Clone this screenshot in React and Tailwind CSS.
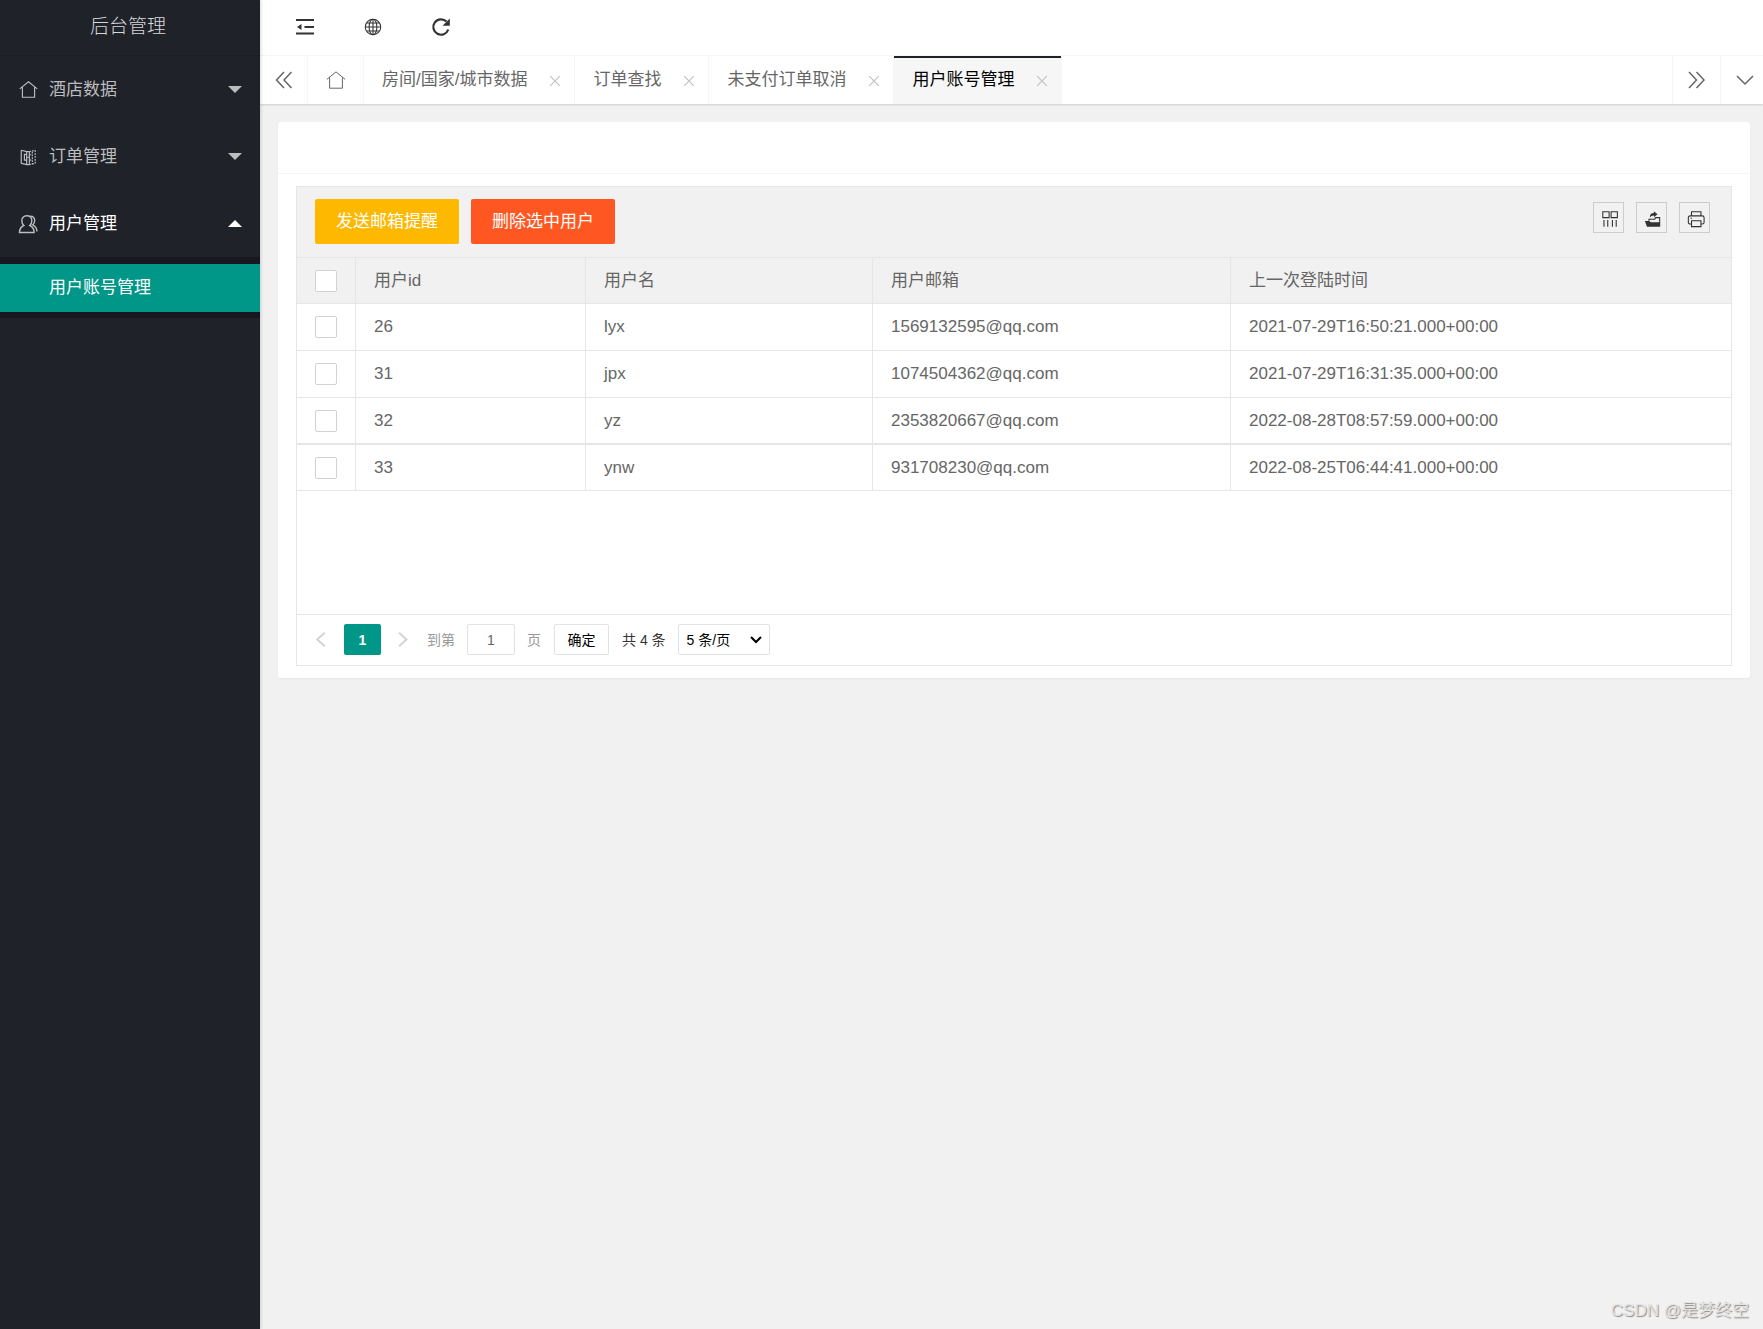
import { useState } from "react";

const users = [
  { id: 26, name: "lyx", email: "1569132595@qq.com", last: "2021-07-29T16:50:21.000+00:00" },
  { id: 31, name: "jpx", email: "1074504362@qq.com", last: "2021-07-29T16:31:35.000+00:00" },
  { id: 32, name: "yz", email: "2353820667@qq.com", last: "2022-08-28T08:57:59.000+00:00" },
  { id: 33, name: "ynw", email: "931708230@qq.com", last: "2022-08-25T06:44:41.000+00:00" },
];

const tabs = ["房间/国家/城市数据", "订单查找", "未支付订单取消", "用户账号管理"];

function Svg({ size = 20, children, ...rest }) {
  return (
    <svg
      width={size}
      height={size}
      viewBox="0 0 20 20"
      fill="none"
      stroke="currentColor"
      strokeWidth="1"
      aria-hidden="true"
      className="shrink-0"
      {...rest}
    >
      {children}
    </svg>
  );
}

const HomeIcon = ({ size, weight = 1 }) => (
  <Svg size={size} strokeWidth={weight}>
    <path d="M.8 9.4 10 1.9l9.2 7.500M3.600 7.600v10.600h12.800V7.600" />
  </Svg>
);

const OrderIcon = () => (
  <Svg size={18} strokeWidth="1.300">
    <path d="M2.500 2.500v14.500l6 1.500h3M2.500 2.500l6 1.500h3M8.500 7H6v6.500h2.500M8.500 4v14.500M11.500 4v14.500M8.500 10.300h3" />
    <path d="M14.800 4v14M18 2.500v15.500" strokeDasharray="2 1.200" />
    <path d="M11.500 4l6.500-1.500M11.500 18.500l6.500-1.500M11.500 7.500h3M11.500 13.500h3" strokeDasharray="2 1.200" />
  </Svg>
);

const UserIcon = () => (
  <Svg size={20} strokeWidth="1.400">
    <path d="M1.500 18.500c0-4 2-6 4.300-7C4.300 10.300 3.800 8.700 3.800 6.800 3.800 3.900 5.600 1.800 8.800 1.800s5 2.100 5 5c0 1.900-.6 3.500-2 4.700 2.400 1 4.300 3 4.300 7z" />
    <path d="M12.500 2.300c2.600-.2 4.200 1.700 4.200 4.300 0 1.900-.7 3.300-2 4.300 2.300 1 4 3 4.300 6.600" />
  </Svg>
);

const DoubleLeft = () => (
  <Svg strokeWidth="1.500">
    <path d="M10 2 2.500 10l7.500 8M17.500 2l-7.500 8 7.500 8" />
  </Svg>
);
const DoubleRight = () => (
  <Svg strokeWidth="1.500">
    <path d="M2 2l7.500 8L2 18M9.500 2l7.500 8-7.500 8" />
  </Svg>
);

function NavItem({ icon, label, open }) {
  return (
    <button
      type="button"
      aria-expanded={open}
      className={
        "flex h-[67px] w-full items-center px-[18px] text-left " +
        (open ? "text-white" : "text-[#bcbdbf]")
      }
    >
      <span className="flex w-5 justify-center text-[#bcbdbf]">{icon}</span>
      <span className="ml-[11px] grow">{label}</span>
      <svg width="14" height="7" viewBox="0 0 14 7" fill="currentColor" aria-hidden="true">
        <path d={open ? "M0 7 7 0l7 7z" : "M0 0h14L7 7z"} />
      </svg>
    </button>
  );
}

function CheckBox({ label }) {
  return (
    <input
      type="checkbox"
      aria-label={label}
      className="block size-[22px] appearance-none rounded-[2px] border border-[#d2d2d2] bg-white checked:bg-[#009688]"
    />
  );
}

function ToolButton({ label, children }) {
  return (
    <button
      type="button"
      aria-label={label}
      className="flex size-[31px] items-center justify-center border border-[#ccc] pt-[2px] pl-[3px] text-[#333]"
    >
      {children}
    </button>
  );
}

export default function App() {
  const [active, setActive] = useState(3);
  const [page, setPage] = useState("1");
  const cell = "border-b border-[#e6e6e6] px-[18px] text-left font-normal";

  return (
    <div className="flex min-h-screen bg-[#f1f1f1] font-['Liberation_Sans','Noto_Sans_CJK_SC',sans-serif] text-[17px] leading-6 text-[#666]">
      <aside className="z-20 w-[260px] shrink-0 bg-[#20222a] shadow-[1px_0_3px_rgba(0,0,0,0.15)]">
        <h1 className="flex h-14 items-center justify-center border-b border-[#1b1d24] pr-1 pb-[2px] text-[19px] font-light text-[#d8d8da]">
          后台管理
        </h1>
        <nav>
          <NavItem icon={<HomeIcon size={19} weight={1.2} />} label="酒店数据" open={false} />
          <NavItem icon={<OrderIcon />} label="订单管理" open={false} />
          <NavItem icon={<UserIcon />} label="用户管理" open />
          <div className="bg-[#17181e] pt-[7px] pb-[6px]">
            <a href="#users" className="flex h-12 items-center bg-[#009688] pl-[49px] text-white">
              用户账号管理
            </a>
          </div>
        </nav>
      </aside>

      <div className="relative flex min-w-0 grow flex-col">
        <header className="flex h-14 items-center border-b border-[#f6f6f6] bg-white pb-px pl-[11px] text-[#333]">
          <button type="button" aria-label="侧边伸缩" className="flex w-[68px] justify-center">
            <Svg strokeWidth="2">
              <path d="M1 3h18M9.500 10H19M1 16.500h18" />
              <path d="M2 10l4.500-3v6z" fill="currentColor" stroke="none" />
            </Svg>
          </button>
          <button type="button" aria-label="前台" className="flex w-[68px] justify-center">
            <Svg size={18} strokeWidth="1.200">
              <circle cx="10" cy="10" r="8.600" />
              <ellipse cx="10" cy="10" rx="4.300" ry="8.600" />
              <path d="M10 1.400v17.200M1.400 10h17.200M3 5.500h14M3 14.500h14" />
            </Svg>
          </button>
          <button type="button" aria-label="刷新" className="flex w-[68px] justify-center">
            <Svg strokeWidth="2.200">
              <path d="M17.300 12.500A7.700 7.700 0 1 1 15.500 4.600" />
              <path d="M18.800 1.500v7.200h-7.200z" fill="currentColor" stroke="none" />
            </Svg>
          </button>
        </header>

        <div className="z-10 flex h-12 items-stretch bg-white shadow-[0_1px_2px_rgba(0,0,0,0.15)]">
          <button type="button" aria-label="向左" className="flex w-12 items-center justify-center border-r border-[#f6f6f6]">
            <DoubleLeft />
          </button>
          <button type="button" aria-label="主页" className="flex w-14 items-center justify-center border-r border-[#f6f6f6]">
            <HomeIcon size={20} />
          </button>
          {tabs.map((label, i) => (
            <div
              key={label}
              className={
                "flex items-center border-r border-[#f6f6f6] " +
                (i === active ? "bg-[#f6f6f6] text-black shadow-[inset_0_2px_0_#20222a]" : "")
              }
            >
              <button type="button" onClick={() => setActive(i)} className="pl-[18px] whitespace-nowrap">
                {label}
              </button>
              <button type="button" aria-label={"关闭 " + label} className="mt-[2px] mr-[9px] ml-[18px] flex w-5 justify-center text-[#c2c2c2]">
                <Svg size={12} strokeWidth="2">
                  <path d="M2 2l16 16M18 2 2 18" />
                </Svg>
              </button>
            </div>
          ))}
          <button type="button" aria-label="向右" className="ml-auto flex w-12 items-center justify-center border-l border-[#f6f6f6]">
            <DoubleRight />
          </button>
          <button type="button" aria-label="更多" className="flex w-[43px] items-center justify-center border-l border-[#f6f6f6] pl-[5px]">
            <Svg size={20} strokeWidth="1.500">
              <path d="M2 6l8 8 8-8" />
            </Svg>
          </button>
        </div>

        <main className="mt-[18px] mr-[13px] ml-[18px] rounded-[3px] bg-white shadow-[0_1px_2px_rgba(0,0,0,0.05)]">
          <div className="h-[52px] border-b border-[#f6f6f6]" />
          <div className="px-[18px] py-3">
            <section className="border border-[#e6e6e6]">
              <div className="flex h-[71px] items-start gap-3 border-b border-[#e6e6e6] bg-[#f1f1f1] pt-3 pr-[21px] pl-[18px]">
                <button type="button" className="h-[45px] w-36 rounded-[2px] bg-[#ffb800] text-white">
                  发送邮箱提醒
                </button>
                <button type="button" className="h-[45px] w-36 rounded-[2px] bg-[#ff5722] text-white">
                  删除选中用户
                </button>
                <div className="mt-[3px] ml-auto flex gap-3">
                  <ToolButton label="筛选列">
                    <Svg size={18}>
                      <path d="M2 2h7v6.500H2zM11.200 2h7v6.500h-7zM3.300 11v7.500M7.500 11v7.500M12.700 11v7.500M16.900 11v7.500" strokeWidth="1.200" />
                    </Svg>
                  </ToolButton>
                  <ToolButton label="导出">
                    <Svg size={18}>
                      <path d="M1 12.200h5l1.500 1.500h8.500l2-1v6H3.300z" fill="currentColor" stroke="none" />
                      <path d="M17.400 13V8.500h-4.500l-1 1.800H5.500V12" strokeWidth="1.200" />
                      <path d="M6.500 8.500c0-3.500 1.500-5.100 4.500-5.100V1.500l4 3.300-4 3.200V6C9 6 7.500 6.800 6.500 8.500z" fill="currentColor" stroke="none" />
                    </Svg>
                  </ToolButton>
                  <ToolButton label="打印">
                    <Svg size={18} strokeWidth="1.200">
                      <path d="M5 6.500V2h10.500v4.500M5 15.500H3.500Q1.500 15.500 1.500 13.500V8.500Q1.500 6.500 3.500 6.500H17Q19 6.500 19 8.500v5Q19 15.500 17 15.500h-1.500M5 12h10.500v6.500H5zM3.800 9.200h1.600" />
                    </Svg>
                  </ToolButton>
                </div>
              </div>

              <div className="min-h-[356px]">
                <table className="w-full table-fixed border-separate border-spacing-0">
                  <colgroup>
                    <col className="w-[59px]" />
                    <col className="w-[230px]" />
                    <col className="w-[287px]" />
                    <col className="w-[358px]" />
                    <col />
                  </colgroup>
                  <thead>
                    <tr className="h-[46px] bg-[#f1f1f1]">
                      <th className={cell + " border-r"}><CheckBox label="全选" /></th>
                      <th className={cell + " border-r"}>用户id</th>
                      <th className={cell + " border-r"}>用户名</th>
                      <th className={cell + " border-r"}>用户邮箱</th>
                      <th className={cell}>上一次登陆时间</th>
                    </tr>
                  </thead>
                  <tbody>
                    {users.map((u) => (
                      <tr key={u.id} className="h-[47px] last:h-[46px] nth-last-2:*:border-b-2">
                        <td className={cell + " border-r"}><CheckBox label={"选择 " + u.name} /></td>
                        <td className={cell + " border-r"}>{u.id}</td>
                        <td className={cell + " border-r"}>{u.name}</td>
                        <td className={cell + " border-r"}>{u.email}</td>
                        <td className={cell}>{u.last}</td>
                      </tr>
                    ))}
                  </tbody>
                </table>
              </div>

              <div className="flex h-[51px] items-center border-t border-[#e6e6e6] pb-px pl-[18px] text-sm text-[#999]">
                <button type="button" aria-label="上一页" className="flex w-[29px] text-[#d2d2d2]">
                  <Svg size={15} strokeWidth="2.500">
                    <path d="M13 1 3 10l10 9" />
                  </Svg>
                </button>
                <button type="button" className="h-[31px] w-[37px] rounded-[2px] bg-[#009688] font-bold text-white">
                  1
                </button>
                <button type="button" aria-label="下一页" className="flex w-[46px] pl-[15px] text-[#d2d2d2]">
                  <Svg size={15} strokeWidth="2.500">
                    <path d="M4 1l10 9-10 9" />
                  </Svg>
                </button>
                <label htmlFor="page">到第</label>
                <input
                  id="page"
                  value={page}
                  onChange={(e) => setPage(e.target.value)}
                  className="mx-3 h-[31px] w-12 rounded-[2px] border border-[#e2e2e2] bg-white text-center text-[#666]"
                />
                <span>页</span>
                <button type="button" className="mx-[13px] h-[31px] w-[55px] rounded-[2px] border border-[#e2e2e2] bg-white text-black">
                  确定
                </button>
                <span className="text-[#333]">共 4 条</span>
                <div className="relative ml-3">
                  <select
                    aria-label="每页条数"
                    className="block h-[31px] w-[92px] appearance-none rounded-[2px] border border-[#e2e2e2] bg-white pl-2 text-black"
                  >
                    <option>5 条/页</option>
                    <option>10 条/页</option>
                    <option>20 条/页</option>
                  </select>
                  <svg
                    className="pointer-events-none absolute top-3 right-2 text-black"
                    width="12"
                    height="8"
                    viewBox="0 0 12 8"
                    fill="none"
                    stroke="currentColor"
                    strokeWidth="2"
                    aria-hidden="true"
                  >
                    <path d="M1 1l5 5 5-5" />
                  </svg>
                </div>
              </div>
            </section>
          </div>
        </main>

        <p className="absolute right-[14px] bottom-[6px] text-[#e4e4e4] [text-shadow:1px_1px_1px_#888]">
          CSDN @是梦终空
        </p>
      </div>
    </div>
  );
}
